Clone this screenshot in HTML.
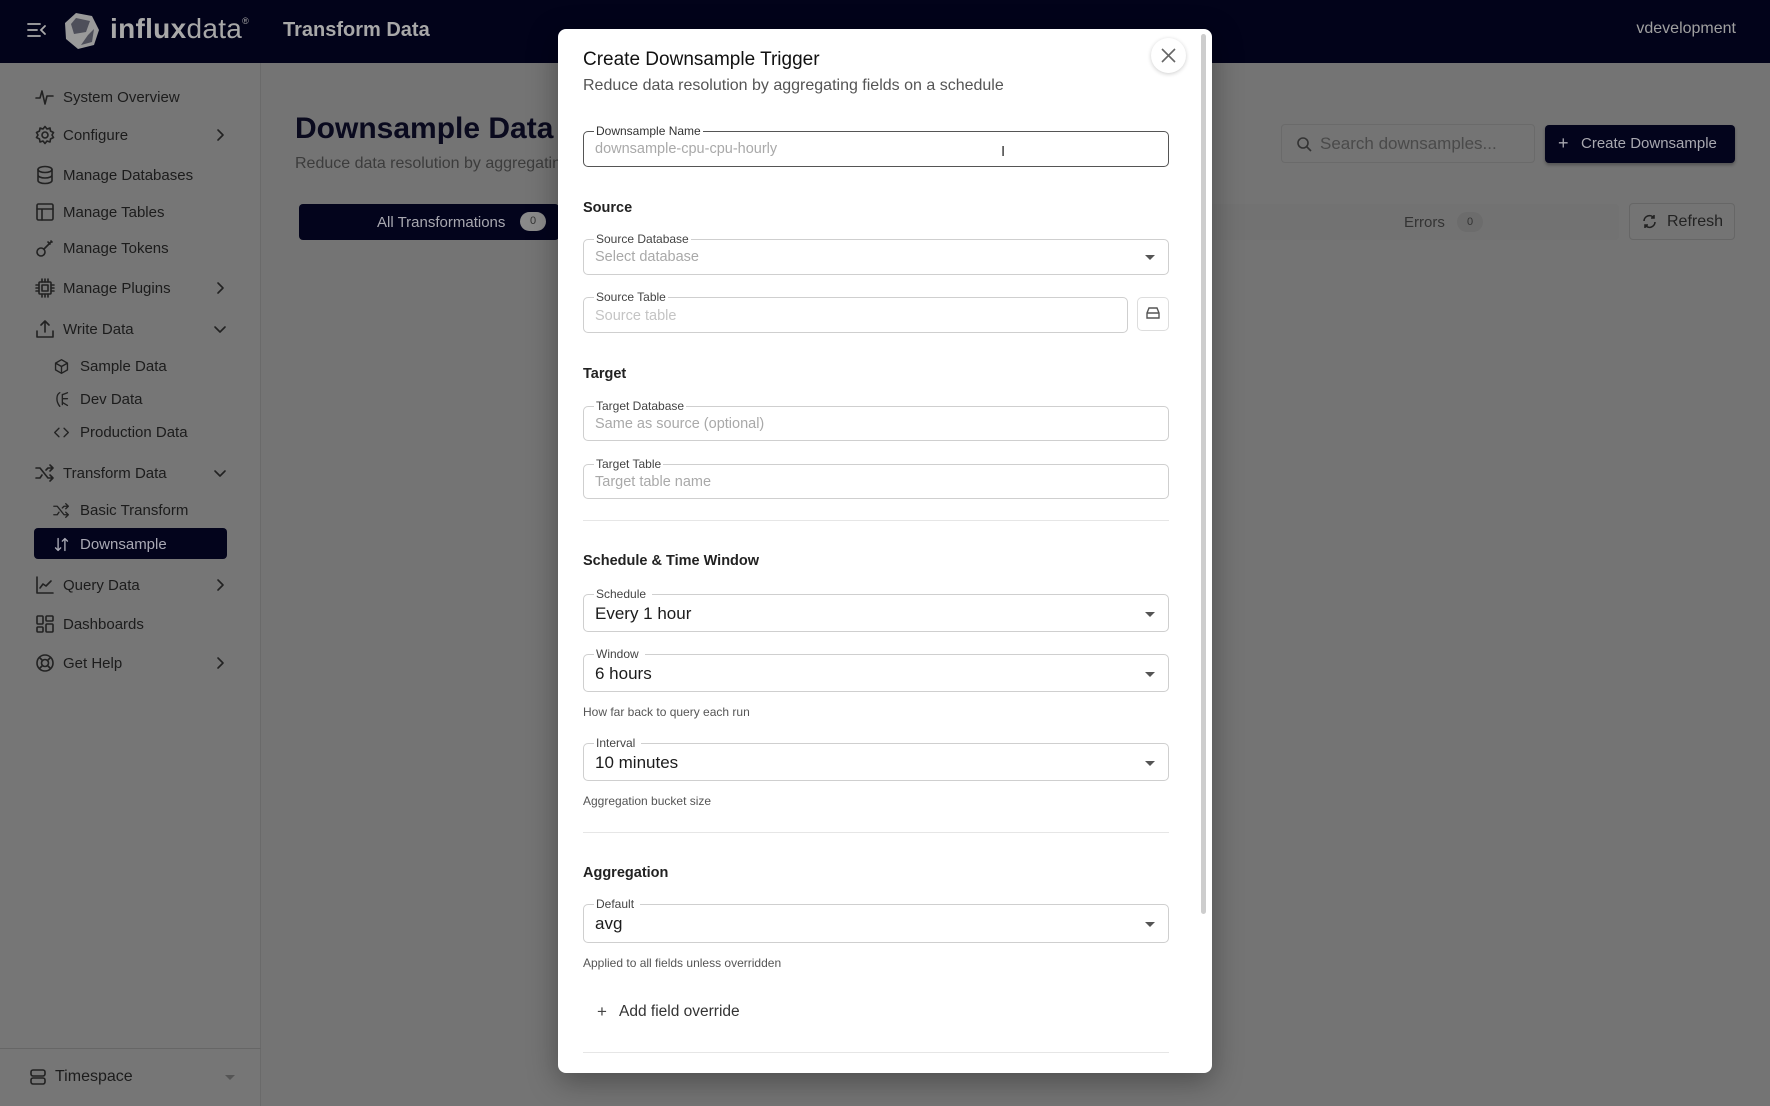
<!DOCTYPE html>
<html><head><meta charset="utf-8"><style>
*{box-sizing:border-box;margin:0;padding:0}
body{width:1770px;height:1106px;overflow:hidden;background:#747474;font-family:"Liberation Sans",sans-serif;position:relative;color:#1e1e1e}
.a{position:absolute}
.hdr{left:0;top:0;width:1770px;height:63px;background:#02031a}
.side{left:0;top:63px;width:261px;height:1043px;border-right:1px solid #6a6a6a;background:#767676}
.it{position:absolute;left:0;width:261px;height:30px;display:flex;align-items:center;font-size:15px;color:#1c1c1c}
.it svg{position:absolute;left:35px;width:20px;height:20px;fill:none;stroke:#222;stroke-width:1.6;stroke-linecap:round;stroke-linejoin:round}
.it span{position:absolute;left:63px}
.it.sub svg{left:53px;width:17px;height:17px}
.it.sub span{left:80px}
.chev{position:absolute;left:213px;width:14px;height:14px}
.fld{position:absolute;left:583px;width:586px;border:1px solid #cfcfcf;border-radius:5px;background:#fff}
.lbl{position:absolute;left:10px;top:-8px;background:#fff;padding:0 2px;font-size:12px;color:#444;line-height:14px}
.ph{position:absolute;left:11px;font-size:14.5px;color:#a9a9a9}
.val{position:absolute;left:11px;font-size:17px;color:#1c1c1c}
.arr{position:absolute;right:13px;width:0;height:0;border-left:5px solid transparent;border-right:5px solid transparent;border-top:5px solid #555}
.h{position:absolute;left:583px;font-size:14.5px;font-weight:bold;color:#222}
.help{position:absolute;left:583px;font-size:12px;color:#555}
.div{position:absolute;left:583px;width:586px;height:1px;background:#e6e6e6}
</style></head><body>
<div class="a hdr">
  <svg class="a" style="left:27px;top:21px" width="20" height="18" viewBox="0 0 20 18" fill="none" stroke="#aaa" stroke-width="1.8" stroke-linecap="round"><path d="M1 3h12M1 9h9M1 15h12M18 5l-4 4 4 4"/></svg>
  <svg class="a" style="left:64px;top:12px" width="36" height="38" viewBox="0 0 36 38" fill="#9a9a9a"><path d="M12 1L28 4 35 18 30 33 14 37 2 27 1 11Z"/><path d="M12 6L26 9 22 20 10 22 7 12Z M24 23L30 17 28 30 17 33Z" fill="#02031a" opacity=".5"/></svg>
  <div class="a" style="left:110px;top:13px;font-size:28px;color:#a8a8a8;letter-spacing:.3px"><b>influx</b>data<sup style="font-size:9px;vertical-align:14px">®</sup></div>
  <div class="a" style="left:283px;top:19px;font-size:20px;font-weight:bold;color:#a8a8a8">Transform Data</div>
  <div class="a" style="right:34px;top:20px;font-size:16px;color:#a0a0a0">vdevelopment</div>
</div>
<div class="a side">
 <div class="it" style="top:19px"><svg viewBox="0 0 20 20"><path d="M1 11h4l2-7 3 13 2-8h6"/></svg><span>System Overview</span></div>
 <div class="it" style="top:57px"><svg viewBox="0 0 20 20"><circle cx="10" cy="10" r="3"/><path d="M10 1.5l2 2.5 3-1 .5 3 3 1.5-1.5 2.5 1.5 2.5-3 1.5-.5 3-3-1-2 2.5-2-2.5-3 1-.5-3-3-1.5L3 10 1.5 7.5l3-1.5.5-3 3 1z"/></svg><span>Configure</span><svg class="chev" viewBox="0 0 14 14" style="left:213px;width:14px;height:14px"><path d="M5 2l5 5-5 5"/></svg></div>
 <div class="it" style="top:97px"><svg viewBox="0 0 20 20"><ellipse cx="10" cy="4.5" rx="7" ry="3"/><path d="M3 4.5v11c0 1.7 3 3 7 3s7-1.3 7-3v-11M3 10c0 1.7 3 3 7 3s7-1.3 7-3"/></svg><span>Manage Databases</span></div>
 <div class="it" style="top:134px"><svg viewBox="0 0 20 20"><rect x="2" y="2" width="16" height="16" rx="1.5"/><path d="M2 7h16M7 7v11"/></svg><span>Manage Tables</span></div>
 <div class="it" style="top:170px"><svg viewBox="0 0 20 20"><circle cx="6" cy="14" r="4"/><path d="M9 11l7-7M13 4l2 2M16 3l1 1"/></svg><span>Manage Tokens</span></div>
 <div class="it" style="top:210px"><svg viewBox="0 0 20 20"><rect x="4" y="4" width="12" height="12" rx="1"/><rect x="7" y="7" width="6" height="6"/><path d="M7 1v3M10 1v3M13 1v3M7 16v3M10 16v3M13 16v3M1 7h3M1 10h3M1 13h3M16 7h3M16 10h3M16 13h3"/></svg><span>Manage Plugins</span><svg class="chev" viewBox="0 0 14 14" style="left:213px;width:14px;height:14px"><path d="M5 2l5 5-5 5"/></svg></div>
 <div class="it" style="top:251px"><svg viewBox="0 0 20 20"><path d="M10 13V2M6 6l4-4 4 4M2 12v6h16v-6"/></svg><span>Write Data</span><svg class="chev" viewBox="0 0 14 14" style="left:213px;width:14px;height:14px"><path d="M2 5l5 5 5-5"/></svg></div>
 <div class="it sub" style="top:288px"><svg viewBox="0 0 20 20"><path d="M10 2l7 4v8l-7 4-7-4V6zM3 6l7 4 7-4M10 10v8"/></svg><span>Sample Data</span></div>
 <div class="it sub" style="top:321px"><svg viewBox="0 0 20 20"><path d="M8 2C4 4 3 12 8 18M12 4l5-2M11 9h6M12 14l5 3M11 4v12"/></svg><span>Dev Data</span></div>
 <div class="it sub" style="top:354px"><svg viewBox="0 0 20 20"><path d="M7 5l-5 5 5 5M13 5l5 5-5 5"/></svg><span>Production Data</span></div>
 <div class="it" style="top:395px"><svg viewBox="0 0 20 20"><path d="M1 5h4l8 10h5M1 15h4l2-3M11 7l2-2h5M15 2l3 3-3 3M15 12l3 3-3 3"/></svg><span>Transform Data</span><svg class="chev" viewBox="0 0 14 14" style="left:213px;width:14px;height:14px"><path d="M2 5l5 5 5-5"/></svg></div>
 <div class="it sub" style="top:432px"><svg viewBox="0 0 20 20"><path d="M1 5h4l8 10h5M1 15h4l2-3M11 7l2-2h5M15 2l3 3-3 3M15 12l3 3-3 3"/></svg><span>Basic Transform</span></div>
 <div class="a" style="left:34px;top:465px;width:193px;height:31px;background:#03041c;border-radius:4px"></div>
 <div class="it sub" style="top:466px;color:#a9a9b4"><svg viewBox="0 0 20 20" style="stroke:#a9a9b4"><path d="M6 3v14M3 14l3 3 3-3M14 17V3M11 6l3-3 3 3"/></svg><span>Downsample</span></div>
 <div class="it" style="top:507px"><svg viewBox="0 0 20 20"><path d="M2 2v16h16M5 13l3-4 3 2 5-5"/></svg><span>Query Data</span><svg class="chev" viewBox="0 0 14 14" style="left:213px;width:14px;height:14px"><path d="M5 2l5 5-5 5"/></svg></div>
 <div class="it" style="top:546px"><svg viewBox="0 0 20 20"><rect x="2" y="2" width="6" height="8" rx="1"/><rect x="11" y="2" width="7" height="5" rx="1"/><rect x="2" y="13" width="6" height="5" rx="1"/><rect x="11" y="10" width="7" height="8" rx="1"/></svg><span>Dashboards</span></div>
 <div class="it" style="top:585px"><svg viewBox="0 0 20 20"><circle cx="10" cy="10" r="8"/><circle cx="10" cy="10" r="3.5"/><path d="M4.5 4.5l3 3M15.5 4.5l-3 3M4.5 15.5l3-3M15.5 15.5l-3-3"/></svg><span>Get Help</span><svg class="chev" viewBox="0 0 14 14" style="left:213px;width:14px;height:14px"><path d="M5 2l5 5-5 5"/></svg></div>
 <div class="a" style="left:0;top:985px;width:261px;height:1px;background:#666"></div>
 <div class="it" style="top:999px;font-size:16px"><svg viewBox="0 0 20 20" style="left:28px"><rect x="3" y="3" width="14" height="6" rx="2"/><rect x="3" y="11" width="14" height="6" rx="2"/></svg><span style="left:55px">Timespace</span><div class="arr" style="right:26px"></div></div>
</div>
<!-- main -->
<div class="a" style="left:295px;top:112px;font-size:30px;font-weight:bold;color:#0a0a1e">Downsample Data</div>
<div class="a" style="left:295px;top:155px;font-size:16px;color:#3c3c3c">Reduce data resolution by aggregating fields on a schedule</div>
<div class="a" style="left:299px;top:204px;width:1320px;height:36px;background:#727272;border-radius:4px"></div>
<div class="a" style="left:299px;top:204px;width:260px;height:36px;background:#03041c;border-radius:4px"></div>
<div class="a" style="left:377px;top:214px;font-size:15px;color:#a8a8b0">All Transformations</div>
<div class="a" style="left:520px;top:212px;width:26px;height:19px;border-radius:10px;background:#8a8a8a;font-size:11px;text-align:center;line-height:19px;color:#333">0</div>
<div class="a" style="left:1404px;top:214px;font-size:15px;color:#333">Errors</div>
<div class="a" style="left:1457px;top:212px;width:26px;height:20px;border-radius:10px;background:#6c6c6c;font-size:11px;text-align:center;line-height:20px;color:#333">0</div>
<div class="a" style="left:1629px;top:203px;width:106px;height:37px;border:1px solid #666;border-radius:4px"></div>
<svg class="a" style="left:1641px;top:213px" width="17" height="17" viewBox="0 0 17 17" fill="none" stroke="#222" stroke-width="1.6"><path d="M3 8a5.5 5.5 0 0 1 10-3M14 9a5.5 5.5 0 0 1-10 3M13 2v3h-3M4 15v-3h3"/></svg>
<div class="a" style="left:1667px;top:213px;font-size:16px;color:#222">Refresh</div>
<div class="a" style="left:1281px;top:124px;width:254px;height:39px;border:1px solid #6a6a6a;border-radius:4px"></div>
<svg class="a" style="left:1296px;top:136px" width="16" height="16" viewBox="0 0 16 16" fill="none" stroke="#333" stroke-width="1.6"><circle cx="7" cy="7" r="5"/><path d="M11 11l4 4"/></svg>
<div class="a" style="left:1320px;top:134px;font-size:17px;color:#4a4a4a">Search downsamples...</div>
<div class="a" style="left:1545px;top:125px;width:190px;height:38px;background:#03041c;border-radius:4px;box-shadow:0 2px 3px rgba(0,0,0,.3)"></div>
<div class="a" style="left:1558px;top:133px;font-size:18px;color:#a8a8b0">+</div>
<div class="a" style="left:1581px;top:135px;font-size:15px;color:#a8a8b0">Create Downsample</div>
<!-- modal -->
<div class="a" style="left:558px;top:29px;width:654px;height:1044px;background:#fff;border-radius:8px;box-shadow:0 8px 30px rgba(0,0,0,.35)"></div>
<div class="a" style="left:1201px;top:34px;width:5px;height:880px;background:#cdcdcd;border-radius:3px"></div>
<div class="a" style="left:583px;top:49px;font-size:19px;color:#111">Create Downsample Trigger</div>
<div class="a" style="left:583px;top:77px;font-size:16px;color:#555">Reduce data resolution by aggregating fields on a schedule</div>
<div class="a" style="left:1151px;top:38px;width:35px;height:35px;border-radius:50%;background:#fff;box-shadow:0 1px 4px rgba(0,0,0,.2)"></div>
<svg class="a" style="left:1160px;top:47px" width="17" height="17" viewBox="0 0 17 17" stroke="#666" stroke-width="1.6"><path d="M2 2l13 13M15 2L2 15"/></svg>

<div class="fld" style="top:131px;height:36px;border:1.5px solid #555"><div class="lbl" style="color:#333">Downsample Name</div><div class="ph" style="top:9px">downsample-cpu-cpu-hourly</div></div>
<div class="a" style="left:1001px;top:143px;font-size:15px;color:#333">I</div>
<div class="h" style="top:200px">Source</div>
<div class="fld" style="top:239px;height:36px"><div class="lbl">Source Database</div><div class="ph" style="top:9px">Select database</div><div class="arr" style="top:15px"></div></div>
<div class="fld" style="top:297px;height:36px;width:545px"><div class="lbl">Source Table</div><div class="ph" style="top:10px;color:#c4c4c4">Source table</div></div>
<div class="a" style="left:1137px;top:297px;width:32px;height:34px;border:1px solid #ddd;border-radius:5px"></div>
<svg class="a" style="left:1145px;top:306px" width="16" height="14" viewBox="0 0 16 14" fill="none" stroke="#555" stroke-width="1.4"><path d="M2 7l2-5h8l2 5v5H2zM2 7h12"/></svg>
<div class="h" style="top:366px">Target</div>
<div class="fld" style="top:406px;height:35px"><div class="lbl">Target Database</div><div class="ph" style="top:9px">Same as source (optional)</div></div>
<div class="fld" style="top:464px;height:35px"><div class="lbl">Target Table</div><div class="ph" style="top:9px">Target table name</div></div>
<div class="div" style="top:520px"></div>
<div class="h" style="top:553px">Schedule &amp; Time Window</div>
<div class="fld" style="top:594px;height:38px"><div class="lbl" style="padding:0 6px 0 2px">Schedule</div><div class="val" style="top:9px">Every 1 hour</div><div class="arr" style="top:17px"></div></div>
<div class="fld" style="top:654px;height:38px"><div class="lbl" style="padding:0 6px 0 2px">Window</div><div class="val" style="top:9px">6 hours</div><div class="arr" style="top:17px"></div></div>
<div class="help" style="top:705px">How far back to query each run</div>
<div class="fld" style="top:743px;height:38px"><div class="lbl" style="padding:0 6px 0 2px">Interval</div><div class="val" style="top:9px">10 minutes</div><div class="arr" style="top:17px"></div></div>
<div class="help" style="top:794px">Aggregation bucket size</div>
<div class="div" style="top:832px"></div>
<div class="h" style="top:865px">Aggregation</div>
<div class="fld" style="top:904px;height:39px"><div class="lbl" style="padding:0 6px 0 2px">Default</div><div class="val" style="top:9px">avg</div><div class="arr" style="top:17px"></div></div>
<div class="help" style="top:956px">Applied to all fields unless overridden</div>
<div class="a" style="left:597px;top:1002px;font-size:17px;color:#444">+</div>
<div class="a" style="left:619px;top:1003px;font-size:15.5px;color:#333">Add field override</div>
<div class="div" style="top:1052px"></div>
</body></html>
